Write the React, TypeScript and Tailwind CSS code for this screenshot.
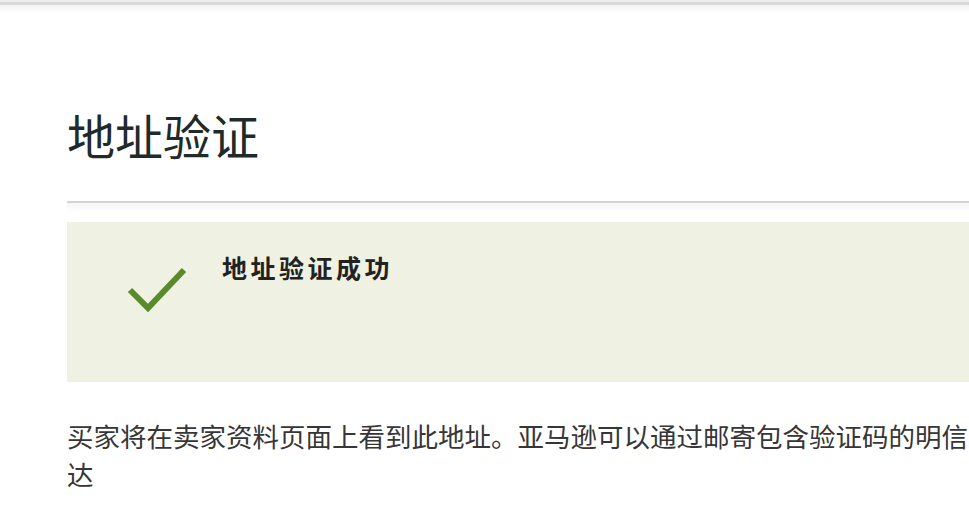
import React from 'react';

const FONT = '"Noto Sans CJK SC", "Noto Sans", "Liberation Sans", sans-serif';

const CheckMark: React.FC = () => (
  <svg width="60" height="46" viewBox="0 0 60 46" className="shrink-0">
    <path
      d="M3 24 L21 42 L57 4"
      fill="none"
      stroke="#5b8a2b"
      strokeWidth="6"
      strokeLinejoin="miter"
    />
  </svg>
);

export default function App() {
  return (
    <div className="w-full min-h-screen bg-white overflow-hidden" style={{ fontFamily: FONT }}>
      {/* top edge of the page */}
      <div className="h-[2px] bg-[#ededed]" />
      <div className="h-[3px] bg-[#d8d8d8]" />
      <div className="h-[8px] bg-gradient-to-b from-[#f2f2f2] to-white" />

      <div className="w-[1330px] pl-[67px]">
        <h1 className="mt-[97px] text-[48px] leading-[48px] font-normal text-[#1f2a2a]">地址验证</h1>

        <div className="mt-[43px] h-[2px] bg-[#d4d4d4]" />
        <div className="h-[10px] bg-gradient-to-b from-[#f6f6f6] to-white" />

        <div className="mt-[9px] h-[160px] bg-[#eff2e3] flex items-start pl-[60px]">
          <div className="mt-[44px]">
            <CheckMark />
          </div>
          <div className="mt-[33px] ml-[35px] text-[25px] leading-[25px] font-bold tracking-[3.5px] text-[#222]">
            地址验证成功
          </div>
        </div>

        <p className="mt-[35px] w-[1330px] text-[26.5px] leading-[38px] text-[#363636]">
          买家将在卖家资料页面上看到此地址。亚马逊可以通过邮寄包含验证码的明信片来验证此地址。请确保地址可以送达
        </p>
      </div>
    </div>
  );
}
